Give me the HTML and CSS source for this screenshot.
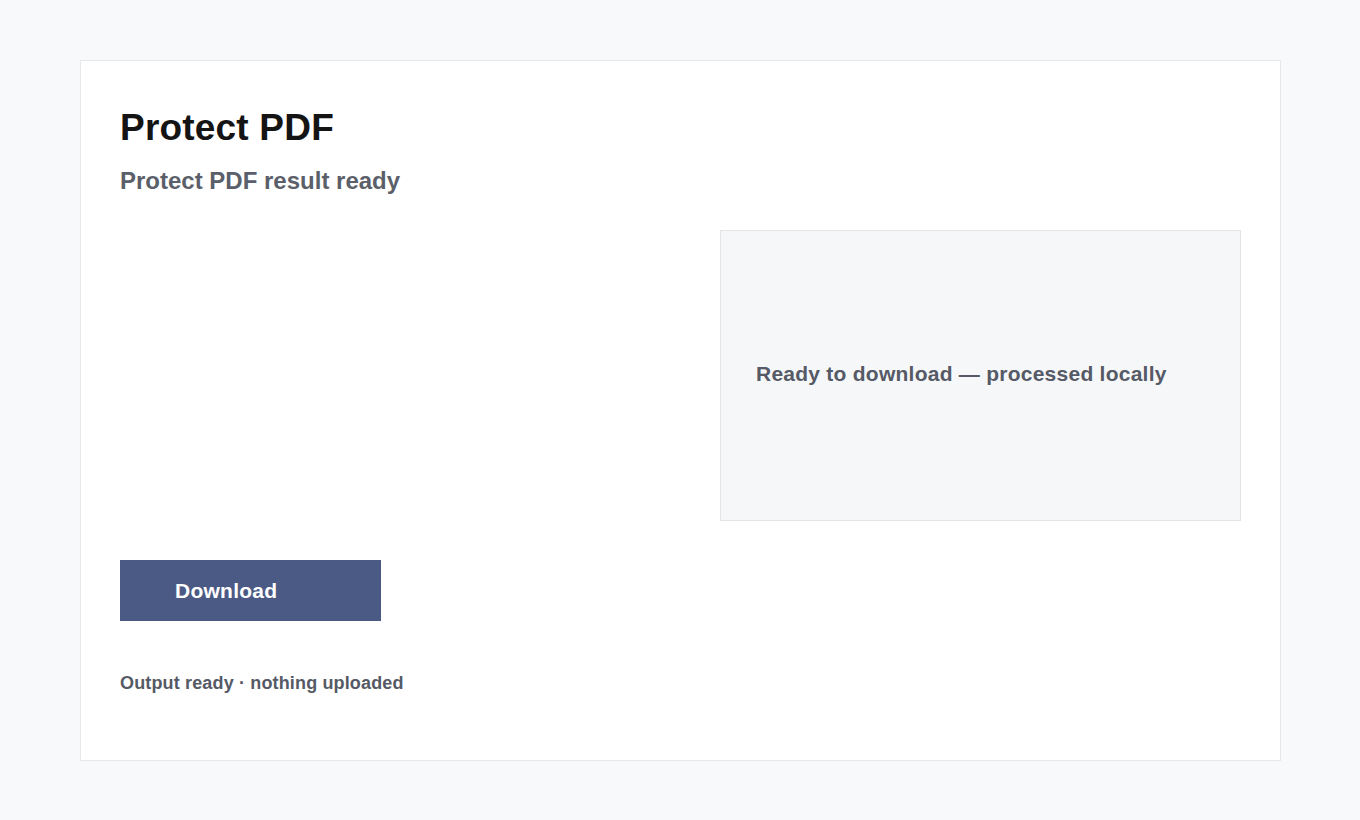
FILE: index.html
```html
<!DOCTYPE html>
<html lang="en">
<head>
    <meta charset="UTF-8">
    <meta name="viewport" content="width=device-width, initial-scale=1.0">
    <title>Protect PDF</title>
    <link rel="stylesheet" href="styles.css">
</head>
<body>

<!-- 结果卡片 -->
<main class="card">
    <h1 class="title">Protect PDF</h1>
    <p class="subtitle">Protect PDF result ready</p>

    <div class="result">
        <div class="result-side"></div>
        <div class="preview">
            <span class="preview-text">Ready to download — processed locally</span>
        </div>
    </div>

    <button class="download-button">Download</button>

    <p class="status">Output ready · nothing uploaded</p>
</main>

</body>
</html>
```

FILE: styles.css
```css
/* 全局样式 */
body {
    font-family: 'Liberation Sans', Arial, sans-serif;
    margin: 0;
    padding: 60px 80px;
    background-color: #f8f9fb;
    color: #555a66;
}

/* 卡片 */
.card {
    box-sizing: border-box;
    width: 1201px;
    height: 701px;
    padding: 45px 40px 40px 39px;
    background-color: #fff;
    border: 1px solid #e7e8eb;
}

.title {
    margin: 0 0 17px 0;
    font-size: 37px;
    line-height: 1.2;
    letter-spacing: 0.2px;
    font-weight: bold;
    color: #141414;
}

.subtitle {
    margin: 0;
    font-size: 24px;
    line-height: 1.2;
    font-weight: bold;
    color: #5b5f6a;
}

/* 结果区域 */
.result {
    display: grid;
    grid-template-columns: 1fr 521px;
    gap: 80px;
    margin-top: 34px;
    margin-right: -1px;
}

.preview {
    box-sizing: border-box;
    height: 291px;
    display: flex;
    align-items: center;
    padding: 0 36px 4px 35px;
    background-color: #f6f7f8;
    border: 1px solid #e3e4e6;
}

.preview-text {
    font-size: 21px;
    line-height: 1.2;
    letter-spacing: 0.25px;
    font-weight: bold;
    color: #555a66;
}

/* 下载按钮 */
.download-button {
    box-sizing: border-box;
    display: flex;
    align-items: center;
    width: 261px;
    height: 61px;
    margin-top: 39px;
    padding: 0 0 0 55px;
    font-family: inherit;
    font-size: 21px;
    letter-spacing: 0.25px;
    font-weight: bold;
    color: #fff;
    background-color: #4b5a84;
    border: none;
    cursor: pointer;
}

.status {
    margin: 52px 0 0 0;
    font-size: 18px;
    line-height: 1.2;
    letter-spacing: 0.15px;
    font-weight: bold;
    color: #555a66;
}
```
